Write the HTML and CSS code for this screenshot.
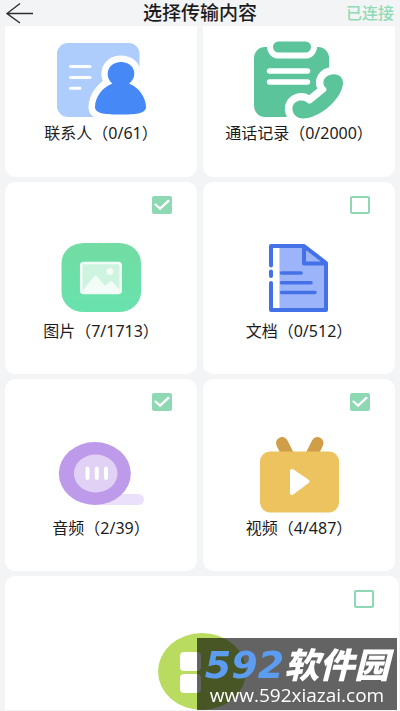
FILE: index.html
```html
<!DOCTYPE html>
<html lang="zh-CN">
<head>
<meta charset="utf-8">
<meta name="viewport" content="width=device-width, initial-scale=1">
<title>选择传输内容</title>
<link rel="stylesheet" href="styles.css">
</head>
<body>
<header class="bar">
  <button class="back" type="button" aria-label="返回">
    <svg width="28" height="22" viewBox="0 0 28 22" fill="none" stroke="#2e2e30" stroke-width="1.4"><path d="M14 1.500L1 11.500L14 21M1 11.500H27"/></svg>
  </button>
  <h1 class="title">选择传输内容</h1>
  <span class="status">已连接</span>
</header>
<main class="grid">
  <section class="card card-cut">
    <svg class="icon" viewBox="56 38 90 80">
      <rect x="57" y="43" width="82.500" height="74" rx="11" fill="#aecdfc"/>
      <path d="M70.500 66.500H90M70.500 77.500H90M70.500 88.300H80" stroke="#fff" stroke-width="3" stroke-linecap="round"/>
      <path d="M112.500 83.500C104 77 107 62 121 62C135 62 138.500 77 129 83.500C139 87 146 98 146 107C146 114 134 114.500 120.500 114.500C107 114.500 95 114 95 107C95 98 102 87 112.500 83.500Z" fill="#fff" stroke="#fff" stroke-width="13" stroke-linejoin="round"/>
      <path d="M112.500 83.500C104 77 107 62 121 62C135 62 138.500 77 129 83.500C139 87 146 98 146 107C146 114 134 114.500 120.500 114.500C107 114.500 95 114 95 107C95 98 102 87 112.500 83.500Z" fill="#4588f6"/>
    </svg>
    <span class="label">联系人（0/61）</span>
  </section>
  <section class="card card-cut">
    <svg class="icon" viewBox="254 38 90 80">
      <rect x="254" y="47" width="75" height="70" rx="11" fill="#5bc49b"/>
      <rect x="270" y="38.500" width="44" height="17" rx="8.500" fill="#5bc49b" stroke="#fff" stroke-width="6"/>
      <path d="M269.500 71H307.500M269.500 82H307.500" stroke="#fff" stroke-width="5.500" stroke-linecap="round"/>
      <path d="M332 74.500C339 73.500 343.500 78 343 84C341 100 319 118.500 303 118.500C296 118.500 291.500 113 292.500 107C294 101 301 99 306.500 102Q309 105 312 102.500L325.500 91.500Q328 89 324.500 86.500C321.500 81 325 75.500 332 74.500Z" fill="#5bc49b" stroke="#fff" stroke-width="15" stroke-linejoin="round" paint-order="stroke"/>
    </svg>
    <span class="label">通话记录（0/2000）</span>
  </section>
  <section class="card">
    <input class="check" type="checkbox" id="pictures" checked>
    <svg class="icon" viewBox="56 236 90 80">
      <defs><linearGradient id="green" x1="0" y1="0" x2="0" y2="1"><stop offset="0" stop-color="#72dca3"/><stop offset="1" stop-color="#69e2ae"/></linearGradient></defs>
      <rect x="61.500" y="243" width="79.500" height="69" rx="22" ry="20" fill="url(#green)"/>
      <rect x="81.200" y="263" width="39.500" height="30" rx="2.500" fill="#cef4e0" stroke="#f3fdf8" stroke-width="2.500"/>
      <circle cx="110" cy="271.500" r="3.300" fill="#f3fdf8"/>
      <path d="M83 290L94 276.500Q95.500 275 97 276.500L105 286L110 281.500Q111 280.500 112 281.500L119 289V293H83Z" fill="#f3fdf8"/>
    </svg>
    <label class="label" for="pictures">图片（7/1713）</label>
  </section>
  <section class="card">
    <input class="check" type="checkbox" id="documents">
    <svg class="icon" viewBox="254 236 90 80">
      <path d="M279.500 246H304L326 263V310H279.500Z" fill="#9bb4fa"/>
      <path d="M271 265.500V246H304L326 263V310H271V283M271 271.500V276M304 246V263.500H326" fill="none" stroke="#4471e8" stroke-width="4" stroke-linejoin="round" stroke-linecap="round"/>
      <path d="M281.500 273H301M281.500 282.700H311M281.500 292.500H315" stroke="#4471e8" stroke-width="3.600" stroke-linecap="round"/>
    </svg>
    <label class="label" for="documents">文档（0/512）</label>
  </section>
  <section class="card">
    <input class="check" type="checkbox" id="audio" checked>
    <svg class="icon" viewBox="56 433 90 80">
      <rect x="90" y="494" width="54" height="11" rx="5.500" fill="#ebe0fb"/>
      <ellipse cx="94.800" cy="473.500" rx="36" ry="31.500" fill="#bd9aea"/>
      <ellipse cx="95.700" cy="473.500" rx="21.800" ry="19" fill="#e0d1f5"/>
      <path d="M87.500 468.500V478M96.800 468.500V478M106 468.500V478" stroke="#fff" stroke-width="4" stroke-linecap="round"/>
    </svg>
    <label class="label" for="audio">音频（2/39）</label>
  </section>
  <section class="card">
    <input class="check" type="checkbox" id="video" checked>
    <svg class="icon" viewBox="254 433 90 80">
      <path d="M282 443L289 457M317.500 443L310.500 457" stroke="#d09d48" stroke-width="12" stroke-linecap="round"/>
      <rect x="260" y="451.500" width="79" height="61" rx="10" fill="#ecc35f"/>
      <path d="M292 471L307.500 481.500L292 493Z" fill="#fff" stroke="#fff" stroke-width="4" stroke-linejoin="round"/>
    </svg>
    <label class="label" for="video">视频（4/487）</label>
  </section>
  <section class="card card-wide">
    <input class="check" type="checkbox" id="apps" aria-label="应用">
    <svg class="icon" viewBox="157 631 90 80">
      <ellipse cx="202" cy="672.500" rx="44" ry="38.500" fill="#b9dc60"/>
      <rect x="180" y="653" width="21" height="19" rx="4" fill="#fff"/>
      <rect x="180" y="675" width="21" height="19" rx="4" fill="#fff"/>
    </svg>
  </section>
</main>
<aside class="mark">
  <p class="brand"><span class="digits">592</span><span class="name">软件园</span></p>
  <p class="site">www.592xiazai.com</p>
</aside>
</body>
</html>
```
FILE: styles.css
```css
* {
  box-sizing: border-box;
}

body {
  margin: 0;
  background: #f3f4f6;
  color: #1c1c1e;
  font-family: "Noto Sans", "Noto Sans CJK SC", sans-serif;
}

.bar {
  display: grid;
  grid-template-columns: 1fr auto 1fr;
  align-items: center;
  height: 26px;
  padding: 0 6px;
}

.back {
  display: flex;
  justify-self: start;
  padding: 0;
  border: 0;
  background: none;
}

.title {
  margin: 0;
  font-size: 19px;
  line-height: 26px;
  font-weight: 500;
}

.status {
  justify-self: end;
  color: #90dab4;
  font-size: 16px;
  line-height: 26px;
  font-weight: 500;
}

.grid {
  display: grid;
  grid-template-columns: 1fr 1fr;
  gap: 5px 6px;
  padding: 0 5px;
}

.card {
  position: relative;
  display: flex;
  flex-direction: column;
  align-items: center;
  justify-content: flex-end;
  min-height: 192px;
  padding-bottom: 33px;
  border-radius: 10px;
  background: #fff;
}

.card-cut {
  min-height: 151px;
  padding-bottom: 34px;
  border-radius: 0 0 10px 10px;
}

.card-wide {
  grid-column: 1 / -1;
  justify-content: flex-start;
  min-height: 0;
  margin-right: -4px;
  padding: 54px 0 0;
  border-radius: 10px 10px 0 0;
}

.icon {
  width: 90px;
  height: 80px;
  overflow: visible;
}

.label {
  margin-top: 5px;
  font-size: 16px;
  line-height: 20px;
  white-space: nowrap;
}

.check {
  appearance: none;
  position: absolute;
  top: 14px;
  right: 25px;
  width: 20px;
  height: 18px;
  margin: 0;
  border: 2px solid #8ed8b3;
  border-radius: 2px;
}

.check:checked {
  background: #8ed8b3;
}

.check:checked::after {
  content: "";
  display: block;
  height: 100%;
  background: #fff;
  clip-path: polygon(0 47%, 10% 38%, 38% 64%, 88% 10%, 100% 22%, 38% 88%);
}

.mark {
  position: fixed;
  right: 3px;
  bottom: 1px;
  width: 200px;
  height: 72px;
  padding-top: 9px;
  background: rgba(0, 0, 0, 0.61);
  color: #fff;
  text-align: center;
}

.mark p {
  margin: 0;
  white-space: nowrap;
}

.brand {
  display: flex;
  justify-content: center;
  align-items: center;
  font-style: italic;
  font-weight: 900;
  line-height: 36px;
}

.digits {
  color: #5c9df2;
  font-family: "DejaVu Sans", sans-serif;
  font-size: 38px;
}

.name {
  font-size: 35px;
}

.site {
  font-family: "Open Sans", sans-serif;
  font-size: 19px;
  line-height: 24px;
}
```
